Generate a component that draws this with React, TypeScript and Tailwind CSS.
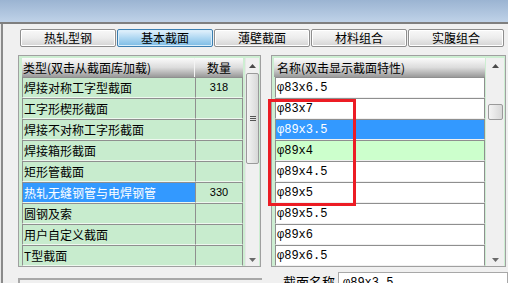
import React from "react";

const CJK = { fontFamily: '"Noto Sans CJK SC", "Noto Sans", sans-serif' };
const MONO = { fontFamily: '"Liberation Mono", "DejaVu Sans Mono", monospace' };

function Tab({ label, selected }: { label: string; selected?: boolean }) {
  return (
    <div
      className={`w-[96px] h-[18px] rounded-[2px] border flex items-center justify-center text-[12px] leading-none text-black ${
        selected
          ? "border-[#3c7fb1] bg-gradient-to-b from-[#e4f2fc] via-[#aed7f2] to-[#7cbbe4] shadow-[inset_0_0_0_1px_#d9eefb]"
          : "border-[#8e8e8e] bg-gradient-to-b from-[#f8f8f8] via-[#ececec] to-[#d4d4d4] shadow-[inset_0_0_0_1px_#ffffff]"
      }`}
    >
      {label}
    </div>
  );
}

function Arrow({ up }: { up?: boolean }) {
  return (
    <svg width="7" height="4" viewBox="0 0 7 4">
      {up ? <path d="M0 4 L3.5 0 L7 4 Z" fill="#4a4a4a" /> : <path d="M0 0 L3.5 4 L7 0 Z" fill="#6a6a6a" />}
    </svg>
  );
}

export default function App() {
  const left: [string, string][] = [
    ["焊接对称工字型截面", "318"],
    ["工字形楔形截面", ""],
    ["焊接不对称工字形截面", ""],
    ["焊接箱形截面", ""],
    ["矩形管截面", ""],
    ["热轧无缝钢管与电焊钢管", "330"],
    ["圆钢及索", ""],
    ["用户自定义截面", ""],
    ["T型截面", ""],
  ];
  const right = ["φ83x6.5", "φ83x7", "φ89x3.5", "φ89x4", "φ89x4.5", "φ89x5", "φ89x5.5", "φ89x6", "φ89x6.5"];

  return (
    <div className="relative w-[508px] h-[283px] overflow-hidden bg-[#f0f0f0]" style={CJK}>
      <div className="h-[22px] bg-gradient-to-b from-[#9bb4d2] to-[#bfd2e8]" />
      <div className="h-[2px] bg-[#7f7f7f]" />
      <div className="flex h-[259px]">
        <div className="w-[1px] bg-[#e8e8e8]" />
        <div className="w-[2px] bg-[#8a8a8a]" />
        <div className="flex-1 flex flex-col pl-[15px] pt-[5px]">
          {/* tabs */}
          <div className="flex gap-[1px] ml-[2px]">
            <Tab label="热轧型钢" />
            <Tab label="基本截面" selected />
            <Tab label="薄壁截面" />
            <Tab label="材料组合" />
            <Tab label="实腹组合" />
          </div>

          {/* tables */}
          <div className="flex mt-[8px]">
            {/* left box */}
            <div className="w-[243px] h-[212px] border border-[#a0a0a0] bg-[#cdeed2] pl-[3px] pt-[2px] flex overflow-hidden">
              <div className="w-[221px] flex flex-col">
                <div className="h-[23px] flex bg-gradient-to-b from-[#fbfbfb] via-[#dcdcdc] to-[#9a9a9a] text-[12px] leading-none text-black">
                  <div className="w-[173px] flex items-center pl-[1px] border-r border-[#f4f4f4]">类型(双击从截面库加载)</div>
                  <div className="flex-1 flex items-center justify-center">数量</div>
                </div>
                {left.map(([name, cnt], i) => {
                  const sel = i === 5;
                  return (
                    <div key={i} className="h-[21px] flex shrink-0 text-[12px] leading-none">
                      <div
                        className={`w-[173px] flex items-center pl-[1px] border-l border-t border-[#8f8f8f] border-b border-b-[#eef8ef] ${
                          sel ? "bg-[#3399ff] text-white" : "bg-[#c8ecce] text-black"
                        }`}
                      >
                        {name}
                      </div>
                      <div
                        className="flex-1 flex items-center justify-center border-l border-t border-r border-[#8f8f8f] border-b border-b-[#eef8ef] bg-[#c8ecce] text-black text-[11px]"
                        style={{ fontFamily: '"Liberation Sans", Arial, sans-serif' }}
                      >
                        {cnt}
                      </div>
                    </div>
                  );
                })}
              </div>
              {/* left scrollbar */}
              <div className="ml-[2px] w-[14px] h-[209px] bg-[#f0f0f0] border-l border-[#e6e6e6] flex flex-col items-center">
                <div className="h-[15px] flex items-center justify-center"><Arrow up /></div>
                <div className="w-[13px] h-[91px] rounded-[2px] border border-[#9a9a9a] bg-gradient-to-r from-[#f4f4f4] to-[#d8d8d8] flex flex-col items-center justify-center gap-[1px]">
                  <div className="w-[6px] h-[1px] bg-[#555]" />
                  <div className="w-[6px] h-[1px] bg-[#555]" />
                  <div className="w-[6px] h-[1px] bg-[#555]" />
                </div>
                <div className="flex-1" />
                <div className="h-[14px] flex items-center justify-center"><Arrow /></div>
              </div>
            </div>

            {/* right box */}
            <div className="ml-[10px] w-[235px] h-[212px] border border-[#a0a0a0] bg-[#cdeed2] pl-[2px] pt-[2px] flex overflow-hidden">
              <div className="w-[211px] flex flex-col">
                <div className="h-[23px] flex items-center pl-[3px] bg-gradient-to-b from-[#fbfbfb] via-[#dcdcdc] to-[#9a9a9a] text-[12px] leading-none text-black">
                  名称(双击显示截面特性)
                </div>
                {right.map((v, i) => {
                  const sel = i === 2;
                  const green = i === 3;
                  return (
                    <div
                      key={i}
                      className={`h-[21px] shrink-0 ml-[1px] flex items-center pl-[1px] border-l border-t border-r border-[#8f8f8f] border-b border-b-[#f0f0f0] text-[12px] leading-none ${
                        sel ? "bg-[#3399ff] text-white" : green ? "bg-[#ccffcc] text-black" : "bg-white text-black"
                      }`}
                      style={MONO}
                    >
                      {v}
                    </div>
                  );
                })}
              </div>
              {/* right scrollbar */}
              <div className="ml-[1px] w-[18px] h-[209px] bg-[#f0f0f0] flex flex-col items-center">
                <div className="h-[16px] flex items-center justify-center"><Arrow up /></div>
                <div className="mt-[30px] w-[15px] h-[16px] rounded-[2px] border border-[#9a9a9a] bg-gradient-to-r from-[#f4f4f4] to-[#d8d8d8]" />
                <div className="flex-1" />
                <div className="h-[14px] flex items-center justify-center"><Arrow /></div>
              </div>
            </div>
          </div>

          {/* bottom */}
          <div className="flex mt-[3px]">
            <div className="w-[244px] mt-[8px] h-[10px] border-t-2 border-l-2 border-[#a8a8a8] bg-[#f0f0f0]" />
            <div className="ml-[21px] text-[13px] leading-none pt-[5px] text-black">截面名称</div>
            <div className="ml-[3px] mt-[2px] flex-1 h-[20px] border border-[#a8a8a8] bg-white pl-[4px] pt-[4px] text-[12px] leading-none" style={MONO}>
              φ89x3.5
            </div>
          </div>
        </div>
      </div>

      {/* red annotation */}
      <div className="absolute left-[268px] top-[99px] w-[88px] h-[107px] border-[3px] border-[#ec1c24]" />
    </div>
  );
}
